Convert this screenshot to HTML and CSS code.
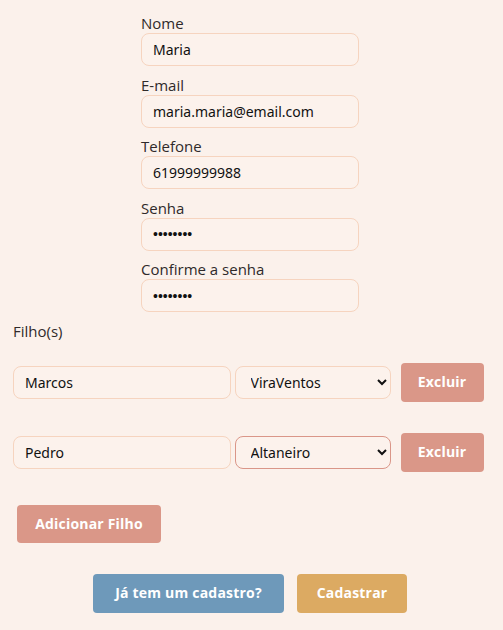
FILE: index.html
```html
<!DOCTYPE html>
<html lang="pt-BR">
<head>
  <meta charset="UTF-8" />
  <meta name="viewport" content="width=device-width, initial-scale=1.0"/>
  <title>Cadastro</title>
  <link rel="stylesheet" href="styles.css">
</head>
<body>
  <div class="page">
    <form class="signup" onsubmit="return false">
      <div class="fields">
        <div class="field">
          <label for="nome">Nome</label>
          <input type="text" id="nome" value="Maria" />
        </div>
        <div class="field">
          <label for="email">E-mail</label>
          <input type="email" id="email" value="maria.maria@email.com" />
        </div>
        <div class="field">
          <label for="telefone">Telefone</label>
          <input type="tel" id="telefone" value="61999999988" />
        </div>
        <div class="field">
          <label for="senha">Senha</label>
          <input type="password" id="senha" value="12345678" />
        </div>
        <div class="field">
          <label for="confirma">Confirme a senha</label>
          <input type="password" id="confirma" value="12345678" />
        </div>
      </div>

      <label class="kids-label">Filho(s)</label>

      <div class="kid-row">
        <input type="text" class="kid-name" value="Marcos" />
        <select class="kid-school">
          <option selected>ViraVentos</option>
          <option>Altaneiro</option>
        </select>
        <button class="btn btn-rose">Excluir</button>
      </div>

      <div class="kid-row">
        <input type="text" class="kid-name" value="Pedro" />
        <select class="kid-school is-active">
          <option>ViraVentos</option>
          <option selected>Altaneiro</option>
        </select>
        <button class="btn btn-rose">Excluir</button>
      </div>

      <button class="btn btn-rose add-kid">Adicionar Filho</button>

      <div class="actions">
        <button class="btn btn-blue login">Já tem um cadastro?</button>
        <button class="btn btn-gold submit">Cadastrar</button>
      </div>
    </form>
  </div>
</body>
</html>
```

FILE: styles.css
```css
* { box-sizing: border-box; }

body {
  margin: 0;
  background: #fbf1eb;
  color: #2f2a2a;
  font-family: 'Open Sans', sans-serif;
}

.page {
  padding: 13px 16px 0 13px;
}

.fields {
  width: 218px;
  margin: 0 auto;
}

.field {
  margin-bottom: 8.5px;
}

label {
  display: block;
  font-size: 15px;
  line-height: 20px;
  color: #2f2a2a;
}

input, select {
  height: 33px;
  border: 1px solid #f6d4bf;
  border-radius: 8px;
  background: #fcf2ec;
  color: #111;
  font-family: 'Noto Sans', sans-serif;
  font-size: 14px;
  padding: 0 11px;
  outline: none;
}

.field input {
  width: 100%;
}

input[type="password"] {
  font-family: 'Liberation Sans', sans-serif;
  font-size: 14px;
}

.kids-label {
  margin-bottom: 22.5px;
}

.kid-row {
  display: flex;
  align-items: center;
  margin-bottom: 31.5px;
}

.kid-name {
  width: 218px;
  margin-right: 3.5px;
}

.kid-school {
  width: 156.5px;
  margin-right: 9.5px;
}

.kid-school.is-active {
  border-color: #da9688;
}

.btn {
  border: none;
  border-radius: 4px;
  padding: 9px 0;
  font-family: 'Open Sans', sans-serif;
  font-weight: bold;
  font-size: 14px;
  line-height: 20.5px;
  letter-spacing: 0.2px;
  color: #fff;
  text-align: center;
  cursor: pointer;
}

.btn-rose { background: #da9788; }
.btn-blue { background: #6e99ba; }
.btn-gold { background: #dcaa62; }

.kid-row .btn { width: 83px; }
.add-kid { width: 144px; margin: 1.5px 0 0 4px; }
.login { width: 191px; }
.submit { width: 110px; }

.actions {
  display: flex;
  justify-content: center;
  gap: 13px;
  margin-top: 31px;
}
```
